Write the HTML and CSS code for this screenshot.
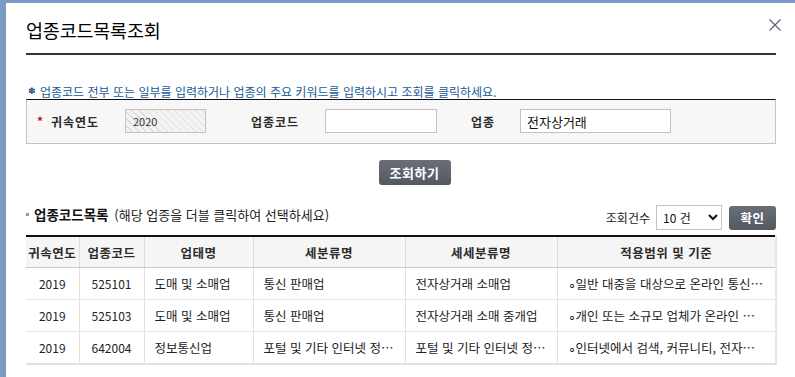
FILE: index.html
```html
<!DOCTYPE html>
<html lang="ko">
<head>
  <meta charset="UTF-8">
  <title>업종코드목록조회</title>
  <link rel="stylesheet" href="styles.css">
</head>
<body>
  <div class="frame">
    <div class="dialog">
      <div class="dlg-head">
        <h2 class="dlg-title">업종코드목록조회</h2>
        <button class="btn-close" type="button" aria-label="닫기">
          <svg width="12" height="12" viewBox="0 0 12 12"><path d="M0.5 0.5L11.5 11.5M11.5 0.5L0.5 11.5" stroke="#59617a" stroke-width="1.2" fill="none"/></svg>
        </button>
      </div>

      <p class="info"><span class="info-mark">✽</span>업종코드 전부 또는 일부를 입력하거나 업종의 주요 키워드를 입력하시고 조회를 클릭하세요.</p>

      <div class="search-box">
        <span class="req">*</span>
        <label class="lbl lbl-year">귀속연도</label>
        <input type="text" class="inp inp-year" value="2020" readonly>
        <label class="lbl lbl-code">업종코드</label>
        <input type="text" class="inp inp-code" value="">
        <label class="lbl lbl-kind">업종</label>
        <input type="text" class="inp inp-kind" value="전자상거래">
      </div>

      <div class="btn-row">
        <button class="btn-dark btn-search" type="button">조회하기</button>
      </div>

      <div class="list-head">
        <h3 class="list-title"><span class="bullet"></span>업종코드목록 <span class="list-sub">(해당 업종을 더블 클릭하여 선택하세요)</span></h3>
        <div class="list-tools">
          <span class="cnt-lbl">조회건수</span>
          <select class="cnt-sel">
            <option>10 건</option>
            <option>20 건</option>
            <option>50 건</option>
          </select>
          <button class="btn-dark btn-ok" type="button">확인</button>
        </div>
      </div>

      <table class="grid">
        <colgroup>
          <col style="width:53px">
          <col style="width:65px">
          <col style="width:109px">
          <col style="width:152px">
          <col style="width:152px">
          <col style="width:219px">
        </colgroup>
        <thead>
          <tr>
            <th>귀속연도</th>
            <th>업종코드</th>
            <th>업태명</th>
            <th>세분류명</th>
            <th>세세분류명</th>
            <th>적용범위 및 기준</th>
          </tr>
        </thead>
        <tbody>
          <tr>
            <td class="c">2019</td>
            <td class="c">525101</td>
            <td>도매 및 소매업</td>
            <td>통신 판매업</td>
            <td>전자상거래 소매업</td>
            <td>∘일반 대중을 대상으로 온라인 통신망을 통하여 각종 상품을 소매</td>
          </tr>
          <tr>
            <td class="c">2019</td>
            <td class="c">525103</td>
            <td>도매 및 소매업</td>
            <td>통신 판매업</td>
            <td>전자상거래 소매 중개업</td>
            <td>∘개인 또는 소규모 업체가 온라인 통신망을 통하여 상품을 거래</td>
          </tr>
          <tr>
            <td class="c">2019</td>
            <td class="c">642004</td>
            <td>정보통신업</td>
            <td>포털 및 기타 인터넷 정보매개 서비스업</td>
            <td>포털 및 기타 인터넷 정보매개 서비스업</td>
            <td>∘인터넷에서 검색, 커뮤니티, 전자상거래 등을 제공</td>
          </tr>
        </tbody>
      </table>
    </div>
  </div>
</body>
</html>
```

FILE: styles.css
```css
html, body {
  margin: 0;
  padding: 0;
  background: #fff;
}
body {
  font-family: "Noto Sans CJK KR", "Noto Sans", sans-serif;
  font-size: 12px;
  color: #222;
}
.frame {
  box-sizing: border-box;
  min-height: 100vh;
  border-top: 3px solid #7b9bc4;
  border-left: 6px solid #7b9bc4;
}
.dialog {
  position: relative;
  width: 750px;
  padding: 0 0 0 20px;
}
.dlg-head {
  padding: 15px 0 11px;
  border-bottom: 2px solid #333;
}
.dlg-title {
  margin: 0;
  font-size: 18.5px;
  font-weight: normal;
  line-height: 24px;
  letter-spacing: -0.2px;
  color: #000;
}
.btn-close {
  position: absolute;
  top: 16px;
  right: -5px;
  width: 12px;
  height: 12px;
  padding: 0;
  border: 0;
  background: none;
  line-height: 0;
}
.info {
  display: flex;
  align-items: center;
  height: 15px;
  margin: 29px 0 0;
  font-size: 12px;
  line-height: 15px;
  color: #15599a;
  white-space: nowrap;
}
.info-mark {
  width: 12px;
  margin-left: 2px;
  font-family: "DejaVu Sans", sans-serif;
  font-size: 9px;
  line-height: 15px;
  font-weight: bold;
  color: #1c4f87;
}
.search-box {
  display: flex;
  align-items: center;
  height: 24px;
  padding: 9px 0 10px 10px;
  background: #f7f7f7;
  border: 1px solid #c3c3c3;
  border-top: 1px solid #111;
}
.req {
  width: 14px;
  color: #c4141a;
  font-weight: bold;
  font-size: 12px;
  line-height: 12px;
}
.lbl {
  font-size: 12px;
  font-weight: bold;
  letter-spacing: 1px;
  color: #2b2b2b;
}
.lbl-year { width: 74px; }
.lbl-code { margin-left: 45px; width: 74px; }
.lbl-kind { margin-left: 34px; width: 49px; }
.inp {
  box-sizing: border-box;
  height: 24px;
  margin: 0;
  padding: 0 6px;
  border: 1px solid #c2c2c2;
  background: #fff;
  font-family: inherit;
  font-size: 12px;
  color: #111;
  outline: none;
}
.inp-year {
  width: 81px;
  padding-left: 7px;
  font-size: 11px;
  color: #333;
  background: repeating-linear-gradient(45deg, #f3f3f3 0, #f3f3f3 4px, #dcdcdc 4px, #dcdcdc 5px);
}
.inp-code { width: 112px; }
.inp-kind { width: 151px; font-size: 13px; }
.btn-row {
  display: flex;
  justify-content: center;
  margin-top: 16px;
}
.btn-dark {
  border: 0;
  border-radius: 3px;
  background: linear-gradient(#6a6f77, #545961);
  color: #fff;
  font-family: inherit;
  font-weight: bold;
  font-size: 13px;
  letter-spacing: 0.5px;
  cursor: pointer;
}
.btn-search {
  width: 72px;
  height: 25px;
  margin-left: 27px;
}
.list-head {
  display: flex;
  justify-content: space-between;
  align-items: flex-start;
  margin-top: 20px;
  height: 25px;
}
.list-title {
  margin: 0;
  font-size: 13.5px;
  font-weight: bold;
  line-height: 18px;
  color: #111;
}
.bullet {
  display: inline-block;
  width: 3px;
  height: 3px;
  margin: 0 5px 3px 0;
  background: #999;
  vertical-align: middle;
}
.list-sub {
  margin-left: 2px;
  font-size: 13px;
  font-weight: normal;
  color: #222;
}
.list-tools {
  display: flex;
  align-items: center;
  height: 25px;
}
.cnt-lbl {
  font-size: 12px;
  margin-right: 6px;
  color: #222;
}
.cnt-sel {
  width: 66px;
  height: 25px;
  margin: 0;
  padding: 0 2px;
  border: 1px solid #c2c2c2;
  border-radius: 0;
  background: #fff;
  font-family: inherit;
  font-size: 12px;
  color: #111;
}
.btn-ok {
  width: 47px;
  height: 24px;
  margin-left: 7px;
  font-size: 12.5px;
}
.grid {
  width: 750px;
  margin-top: 5px;
  border-collapse: collapse;
  table-layout: fixed;
  border-top: 2px solid #111;
  border-bottom: 2px solid #e2e2e2;
  border-right: 2px solid #e8e8e8;
}
.grid th {
  height: 30px;
  padding: 0;
  background: #f5f5f5;
  border-bottom: 1px solid #c9c9c9;
  border-left: 1px solid #dedede;
  font-size: 12.5px;
  font-weight: bold;
  letter-spacing: 0.5px;
  color: #2b2b2b;
}
.grid td {
  height: 31px;
  padding: 0 10px;
  border-bottom: 1px solid #e6e6e6;
  border-left: 1px solid #e0e0e0;
  font-size: 12.5px;
  color: #222;
  white-space: nowrap;
  overflow: hidden;
  text-overflow: ellipsis;
}
.grid th:first-child,
.grid td:first-child {
  border-left: 0;
}
.grid td.c {
  text-align: center;
  padding: 0;
  font-size: 12px;
}
```
